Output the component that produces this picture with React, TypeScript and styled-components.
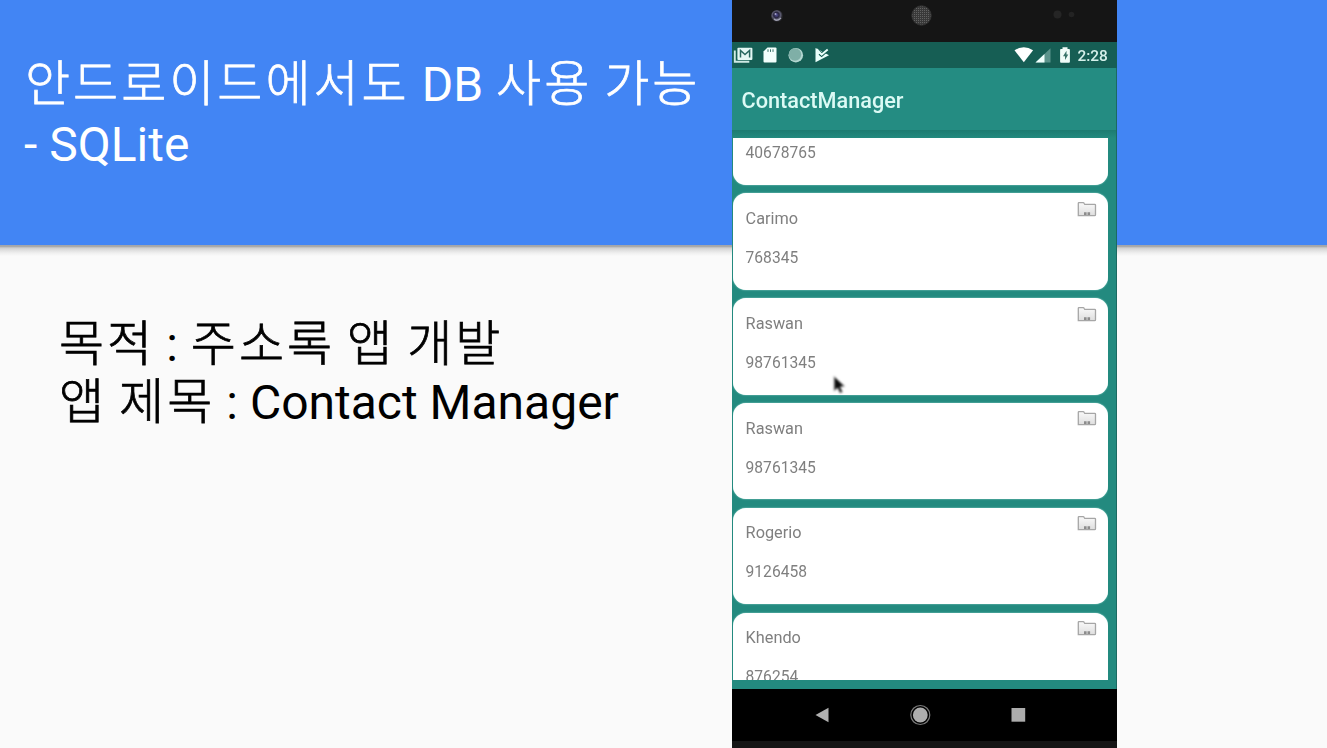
import React from "react";
import styled, { createGlobalStyle } from "styled-components";

const GlobalStyle = createGlobalStyle`
  * { box-sizing: border-box; }
  body { margin: 0; overflow: hidden; font-family: Roboto, "Noto Sans CJK KR", sans-serif; }
`;

const Slide = styled.main`
  position: relative;
  width: 1327px;
  height: 748px;
  overflow: hidden;
  background: #fafafa;
`;

const Banner = styled.header`
  height: 245px;
  padding: 47px 0 0 24px;
  background: #4285f4;
  color: #fff;
`;

const BannerShadow = styled.div`
  height: 11px;
  background: linear-gradient(#9fa3ab 0, #a9a9a9 1.5px, #cfcfcf 3px, #dedede 5px, #efefef 8px, #fafafa 11px);
`;

const Line = styled.div<{ $height: number }>`
  display: flex;
  align-items: baseline;
  height: ${(p) => p.$height}px;
  line-height: ${(p) => p.$height}px;
  white-space: pre;
`;

const Latin = styled.span<{ $before?: number }>`
  font: 400 48px Roboto, sans-serif;
  line-height: inherit;
  margin-left: ${(p) => p.$before ?? 0}px;
`;

const Hangul = styled.span<{ $before?: number }>`
  font: 300 49px "Noto Sans CJK KR", sans-serif;
  line-height: inherit;
  letter-spacing: 3px;
  -webkit-text-stroke: 0.75px currentColor;
  margin-left: ${(p) => p.$before ?? 0}px;
`;

const Body = styled.section`
  padding: 55px 0 0 59px;
  color: #000;
`;

const Phone = styled.aside`
  position: absolute;
  top: 0;
  left: 732px;
  width: 385px;
  height: 748px;
  display: flex;
  flex-direction: column;
  background: #151515;
  overflow: hidden;
`;

const Bezel = styled.div`
  height: 42px;
  flex: none;
  svg { display: block; filter: blur(0.6px); }
`;

const StatusBar = styled.div`
  height: 26px;
  flex: none;
  display: flex;
  justify-content: space-between;
  background: #165e54;
  svg { display: block; filter: blur(0.6px); }
`;

const StatusRight = styled.div`
  display: flex;
`;

const Clock = styled.span`
  width: 39.5px;
  font: 500 15.4px/29px Roboto, sans-serif;
  color: #d5f0ea;
  filter: blur(0.6px);
`;

const AppBar = styled.div`
  height: 62px;
  flex: none;
  padding-left: 9.5px;
  background: #248c82;
  border-right: 1px solid #1b6a62;
  color: #dcfaf5;
  font: 500 21.7px/65px Roboto, sans-serif;
`;

const AppTitle = styled.span`
  display: block;
  filter: blur(0.65px);
`;

const Screen = styled.div`
  height: 558.5px;
  flex: none;
  padding: 8px 8px 8.5px 1px;
  border-right: 1px solid #1b6a62;
  background: linear-gradient(#1d7b71, #238a7f 8px, #238a7f);
`;

const List = styled.div`
  height: 542px;
  width: 375px;
  display: flex;
  flex-direction: column;
  gap: 8.4px;
  overflow: hidden;
`;

const Card = styled.article<{ $visible?: number; $cut?: "top" | "bottom" }>`
  flex: none;
  height: ${(p) => p.$visible ?? 96.4}px;
  display: flex;
  flex-direction: column;
  justify-content: ${(p) => (p.$cut === "top" ? "flex-end" : "flex-start")};
  overflow: hidden;
  background: #fff;
  border-radius: ${(p) =>
    p.$cut === "top" ? "0 0 13px 13px" : p.$cut === "bottom" ? "13px 13px 0 0" : "13px"};
  box-shadow: 0 0 1.5px #c5f4ec;
`;

const CardTop = styled.div`
  flex: none;
  display: flex;
  justify-content: space-between;
  height: 45px;
  padding: 0 10px 0 12.6px;
`;

const Label = styled.span`
  font: 400 16.3px/20px Roboto, sans-serif;
  color: #7f7f7f;
  filter: blur(0.7px);
`;

const Name = styled(Label)`
  margin-top: 15.6px;
`;

const PhoneNumber = styled(Label)`
  flex: none;
  height: 51.4px;
  padding: 9.6px 0 0 12.6px;
  font-size: 15.6px;
`;

const NavBar = styled.nav`
  height: 52.5px;
  flex: none;
  background: #000;
  svg { display: block; filter: blur(0.6px); }
`;

const Pointer = styled.svg`
  position: absolute;
  left: 98px;
  top: 373px;
  filter: blur(0.8px);
`;

const Folder = styled.svg`
  margin-top: 6.4px;
  filter: blur(0.6px);
`;

const FolderIcon = () => (
  <Folder width="22" height="20" viewBox="0 0 22 20">
    <defs>
      <linearGradient id="folder" x1="0" y1="0" x2="0" y2="1">
        <stop offset="0" stopColor="#fafafa" />
        <stop offset="1" stopColor="#dedede" />
      </linearGradient>
    </defs>
    <path
      d="M2.3 15.5V3.2q0-.6.6-.6h4.2q.7 0 1 .7l.6 1h10q.8 0 .8.8v9.6q0 .9-.9.9z"
      fill="url(#folder)"
      stroke="#a6a6a6"
      strokeWidth="1.3"
    />
    <path d="M8 12.2h2.6v2.7H8zm3.5 0h2.6v2.7h-2.6z" fill="#8c8c8c" />
  </Folder>
);

type Contact = { name?: string; number: string; visible?: number; cut?: "top" | "bottom" };

const contacts: Contact[] = [
  { number: "40678765", visible: 47, cut: "top" },
  { name: "Carimo", number: "768345" },
  { name: "Raswan", number: "98761345" },
  { name: "Raswan", number: "98761345" },
  { name: "Rogerio", number: "9126458" },
  { name: "Khendo", number: "876254", visible: 67.2, cut: "bottom" },
];

const ContactCard = ({ name, number, visible, cut }: Contact) => (
  <Card $visible={visible} $cut={cut}>
    {name && (
      <CardTop>
        <Name>{name}</Name>
        <FolderIcon />
      </CardTop>
    )}
    <PhoneNumber>{number}</PhoneNumber>
  </Card>
);

export default function App() {
  return (
    <Slide>
      <GlobalStyle />
      <Banner>
        <Line $height={65}>
          <Hangul $before={1}>안드로이드에서도</Hangul>
          <Latin $before={12}>DB</Latin>
          <Hangul $before={13}>사용</Hangul>
          <Hangul $before={12}>가능</Hangul>
        </Line>
        <Line $height={65}>
          <Latin>- SQLite</Latin>
        </Line>
      </Banner>
      <BannerShadow />
      <Body>
        <Line $height={58}>
          <Hangul>목적</Hangul>
          <Latin $before={11}>:</Latin>
          <Hangul $before={13}>주소록</Hangul>
          <Hangul $before={12}>앱</Hangul>
          <Hangul $before={12}>개발</Hangul>
        </Line>
        <Line $height={58}>
          <Hangul>앱</Hangul>
          <Hangul $before={12}>제목</Hangul>
          <Latin $before={11}>:</Latin>
          <Latin $before={12}>Contact Manager</Latin>
        </Line>
      </Body>

      <Phone>
        <Bezel>
          <svg width="385" height="42">
            <defs>
              <radialGradient id="lens" cx="45%" cy="42%">
                <stop offset="0" stopColor="#55509a" />
                <stop offset=".45" stopColor="#28253f" />
                <stop offset=".7" stopColor="#5c5b70" />
                <stop offset="1" stopColor="#222226" />
              </radialGradient>
              <pattern id="mesh" width="2" height="2" patternUnits="userSpaceOnUse">
                <rect width="2" height="2" fill="#393939" />
                <rect width="1" height="1" fill="#626262" />
              </pattern>
            </defs>
            <circle cx="45" cy="16" r="6" fill="url(#lens)" />
            <path d="M42 19q3 3 7-1" stroke="#b9b9cc" strokeWidth="1.4" fill="none" opacity=".8" />
            <circle cx="43.5" cy="14" r="1" fill="#d0cfee" opacity=".7" />
            <circle cx="189.5" cy="15.5" r="9.7" fill="url(#mesh)" stroke="#333" />
            <circle cx="325.5" cy="14.5" r="4" fill="#252525" />
            <circle cx="339.5" cy="14.5" r="2.8" fill="#232323" />
          </svg>
        </Bezel>
        <StatusBar>
          <svg width="104" height="26">
            <path d="M2.8 8.5v11.2h14.5" stroke="#cfe9e4" strokeWidth="1.9" fill="none" />
            <rect x="5.4" y="5.8" width="15" height="12.2" rx="1" fill="#e4f7f4" />
            <path d="M8.5 15.5v-7l4.5 4 4.6-4v7" stroke="#28675f" strokeWidth="1.5" fill="none" />
            <path d="M35.5 5.5h8q1 0 1 1v13q0 1-1 1h-11q-1 0-1-1v-10z" fill="#f2fffc" />
            <path d="M36 7.3v2.6m2.5-2.6v2.6M41 7.3v2.6" stroke="#397269" strokeWidth="1" />
            <circle cx="63.8" cy="13.2" r="7.3" fill="#b4d7d1" />
            <circle cx="63" cy="12.5" r="6.2" fill="#7fafa7" />
            <path d="M83.5 6.1v14.2L97 13.2z" fill="#e9fffb" />
            <path d="m86 8 3.5 3.3L95 7" stroke="#165e54" strokeWidth="2" fill="none" />
            <path d="m87 12.3 2.6 2.2 5.5-5" stroke="#165e54" strokeWidth="1.3" fill="none" />
            <path d="m84.5 7.2 5.2 5.2 6-5" stroke="#e9fffb" strokeWidth="1.9" fill="none" />
          </svg>
          <StatusRight>
            <svg width="66" height="26">
              <path d="M2.5 8.3q9.3-6.3 18.6 0l-9.3 12z" fill="#fff" />
              <path d="M38.5 6.3V20.5h-15z" fill="#5b938b" />
              <path d="M32.5 11.9v8.6h-9z" fill="#f0fffc" />
              <path d="M50.5 5.2h5v1.7h1.5q.9 0 .9.9v12q0 .9-.9.9h-8q-.9 0-.9-.9v-12q0-.9.9-.9h1.5z" fill="#effcf9" />
              <path d="m54.5 8.8-3.5 5.4h2v3.8l3.3-5.5h-1.8z" fill="#39736a" />
            </svg>
            <Clock>2:28</Clock>
          </StatusRight>
        </StatusBar>
        <AppBar>
          <AppTitle>ContactManager</AppTitle>
        </AppBar>
        <Screen>
          <List>
            {contacts.map((c, i) => (
              <ContactCard key={i} {...c} />
            ))}
          </List>
        </Screen>
        <NavBar>
          <svg width="385" height="52">
            <path d="M83.5 26 96.5 18.8v14.5z" fill="#b0b0b0" />
            <circle cx="188.3" cy="26" r="9.5" fill="none" stroke="#7b7b7b" strokeWidth="1.2" />
            <circle cx="188.3" cy="26" r="7.4" fill="#adadad" />
            <rect x="279.5" y="19" width="13.7" height="13.7" fill="#acacac" />
          </svg>
        </NavBar>
        <Pointer width="18" height="24" viewBox="0 0 18 24">
          <path
            d="M4 3.2v15l3.6-3.1 2.3 5.1 2.8-1.2-2.4-5 4.7-.5z"
            fill="#0c0c0c"
            stroke="#c9c9c9"
            strokeWidth="1"
          />
        </Pointer>
      </Phone>
    </Slide>
  );
}
